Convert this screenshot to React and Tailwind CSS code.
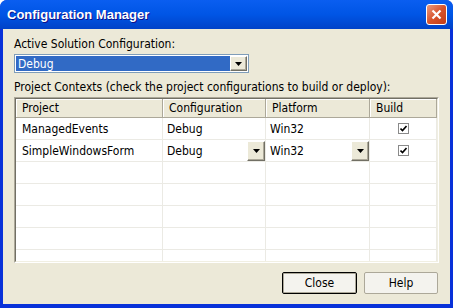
import React from "react";

const font = { fontFamily: '"DejaVu Sans Condensed", "Open Sans", Arial, sans-serif' };

function Arrow() {
  return (
    <svg width="7" height="4" viewBox="0 0 7 4">
      <path d="M0 0h7L3.5 4z" fill="#000" />
    </svg>
  );
}

function DropButton({ className = "" }) {
  return (
    <div
      className={
        "flex items-center justify-center bg-[#ECE9D8] border border-t-white border-l-white border-r-[#716F64] border-b-[#716F64] shadow-[inset_-1px_-1px_0_#ACA899] " +
        className
      }
    >
      <Arrow />
    </div>
  );
}

function Check() {
  return (
    <div className="w-[11px] h-[11px] border border-[#8A8A8A] bg-white flex items-center justify-center">
      <svg width="7" height="7" viewBox="0 0 7 7">
        <path d="M0.5 3.5l2 2L6.5 1" stroke="#000" strokeWidth="1.6" fill="none" />
      </svg>
    </div>
  );
}

const cols = ["w-[147px]", "w-[103px]", "w-[104px]", "w-[67px]"];

function HeaderCell({ children, w }) {
  return (
    <div
      className={
        w +
        " h-[19px] flex items-center pl-[6px] bg-[#ECE9D8] border-r border-b border-r-[#ACA899] border-b-[#ACA899] shadow-[inset_1px_1px_0_#fff]"
      }
    >
      {children}
    </div>
  );
}

function Cell({ children, w, className = "" }) {
  return (
    <div
      className={
        w +
        " h-[22px] flex items-center border-r border-b border-[#EBEAE4] " +
        className
      }
    >
      {children}
    </div>
  );
}

const rows = [
  { name: "ManagedEvents", cfg: "Debug", plat: "Win32", drop: false },
  { name: "SimpleWindowsForm", cfg: "Debug", plat: "Win32", drop: true },
];

export default function App() {
  return (
    <div
      className="w-[453px] h-[308px] flex flex-col bg-[#0831D9] rounded-t-[7px] overflow-hidden text-[12px] text-black"
      style={font}
    >
      {/* Title bar */}
      <div className="h-[29px] flex items-center justify-between pl-[7px] pr-[6px] bg-gradient-to-b from-[#0A5EF0] via-[#0055E5] to-[#0042C8]">
        <span
          className="text-white font-bold text-[13px] [text-shadow:1px_1px_0_#0F1089]"
          style={{ fontFamily: '"Liberation Sans", Arial, sans-serif' }}
        >
          Configuration Manager
        </span>
        <div className="w-[21px] h-[21px] rounded-[3px] border border-white bg-gradient-to-br from-[#E89A7E] via-[#D8532B] to-[#C23C17] flex items-center justify-center">
          <svg width="11" height="11" viewBox="0 0 11 11">
            <path d="M1.5 1.5l8 8M9.5 1.5l-8 8" stroke="#fff" strokeWidth="2.2" />
          </svg>
        </div>
      </div>

      {/* Body */}
      <div className="flex-1 mx-[3px] mb-[4px] bg-[#ECE9D8] flex flex-col pl-[11px] pr-[11px] pt-[8px]">
        <div className="h-[14px] leading-[14px]">Active Solution Configuration:</div>
        <div className="mt-[3px] w-[235px] h-[19px] flex border border-[#7F9DB9] bg-white p-px">
          <div className="flex-1 bg-[#316AC5] text-white flex items-center pl-[2px]">Debug</div>
          <DropButton className="w-[17px]" />
        </div>
        <div className="mt-[7px] h-[14px] leading-[14px]">
          Project Contexts (check the project configurations to build or deploy):
        </div>

        {/* Grid */}
        <div className="mt-[3px] w-[425px] h-[166px] border border-t-[#ACA899] border-l-[#ACA899] border-r-white border-b-white">
          <div className="w-full h-full border border-t-[#716F64] border-l-[#716F64] border-r-[#F1EFE2] border-b-[#F1EFE2] bg-white overflow-hidden">
            <div className="flex">
              <HeaderCell w={cols[0]}>Project</HeaderCell>
              <HeaderCell w={cols[1]}>Configuration</HeaderCell>
              <HeaderCell w={cols[2]}>Platform</HeaderCell>
              <HeaderCell w={cols[3]}>Build</HeaderCell>
            </div>
            {rows.map((r) => (
              <div key={r.name} className="flex">
                <Cell w={cols[0]} className="pl-[6px]">{r.name}</Cell>
                <Cell w={cols[1]} className="pl-[4px] justify-between">
                  <span>{r.cfg}</span>
                  {r.drop && <DropButton className="w-[18px] h-[20px]" />}
                </Cell>
                <Cell w={cols[2]} className="pl-[4px] justify-between">
                  <span>{r.plat}</span>
                  {r.drop && <DropButton className="w-[18px] h-[20px]" />}
                </Cell>
                <Cell w={cols[3]} className="justify-center">
                  <Check />
                </Cell>
              </div>
            ))}
            {[0, 1, 2, 3, 4].map((i) => (
              <div key={i} className="flex">
                <Cell w={cols[0]} />
                <Cell w={cols[1]} />
                <Cell w={cols[2]} />
                <Cell w={cols[3]} />
              </div>
            ))}
          </div>
        </div>

        {/* Buttons */}
        <div className="mt-[9px] flex justify-end gap-[7px] pr-[1px]">
          <button className="w-[75px] h-[22px] border border-black bg-[#F4F3EE] rounded-[2px] shadow-[inset_0_0_0_1px_#ACA899]">
            Close
          </button>
          <button className="w-[74px] h-[22px] border border-[#ACA899] bg-[#F4F3EE] rounded-[2px]">
            Help
          </button>
        </div>
      </div>
    </div>
  );
}
